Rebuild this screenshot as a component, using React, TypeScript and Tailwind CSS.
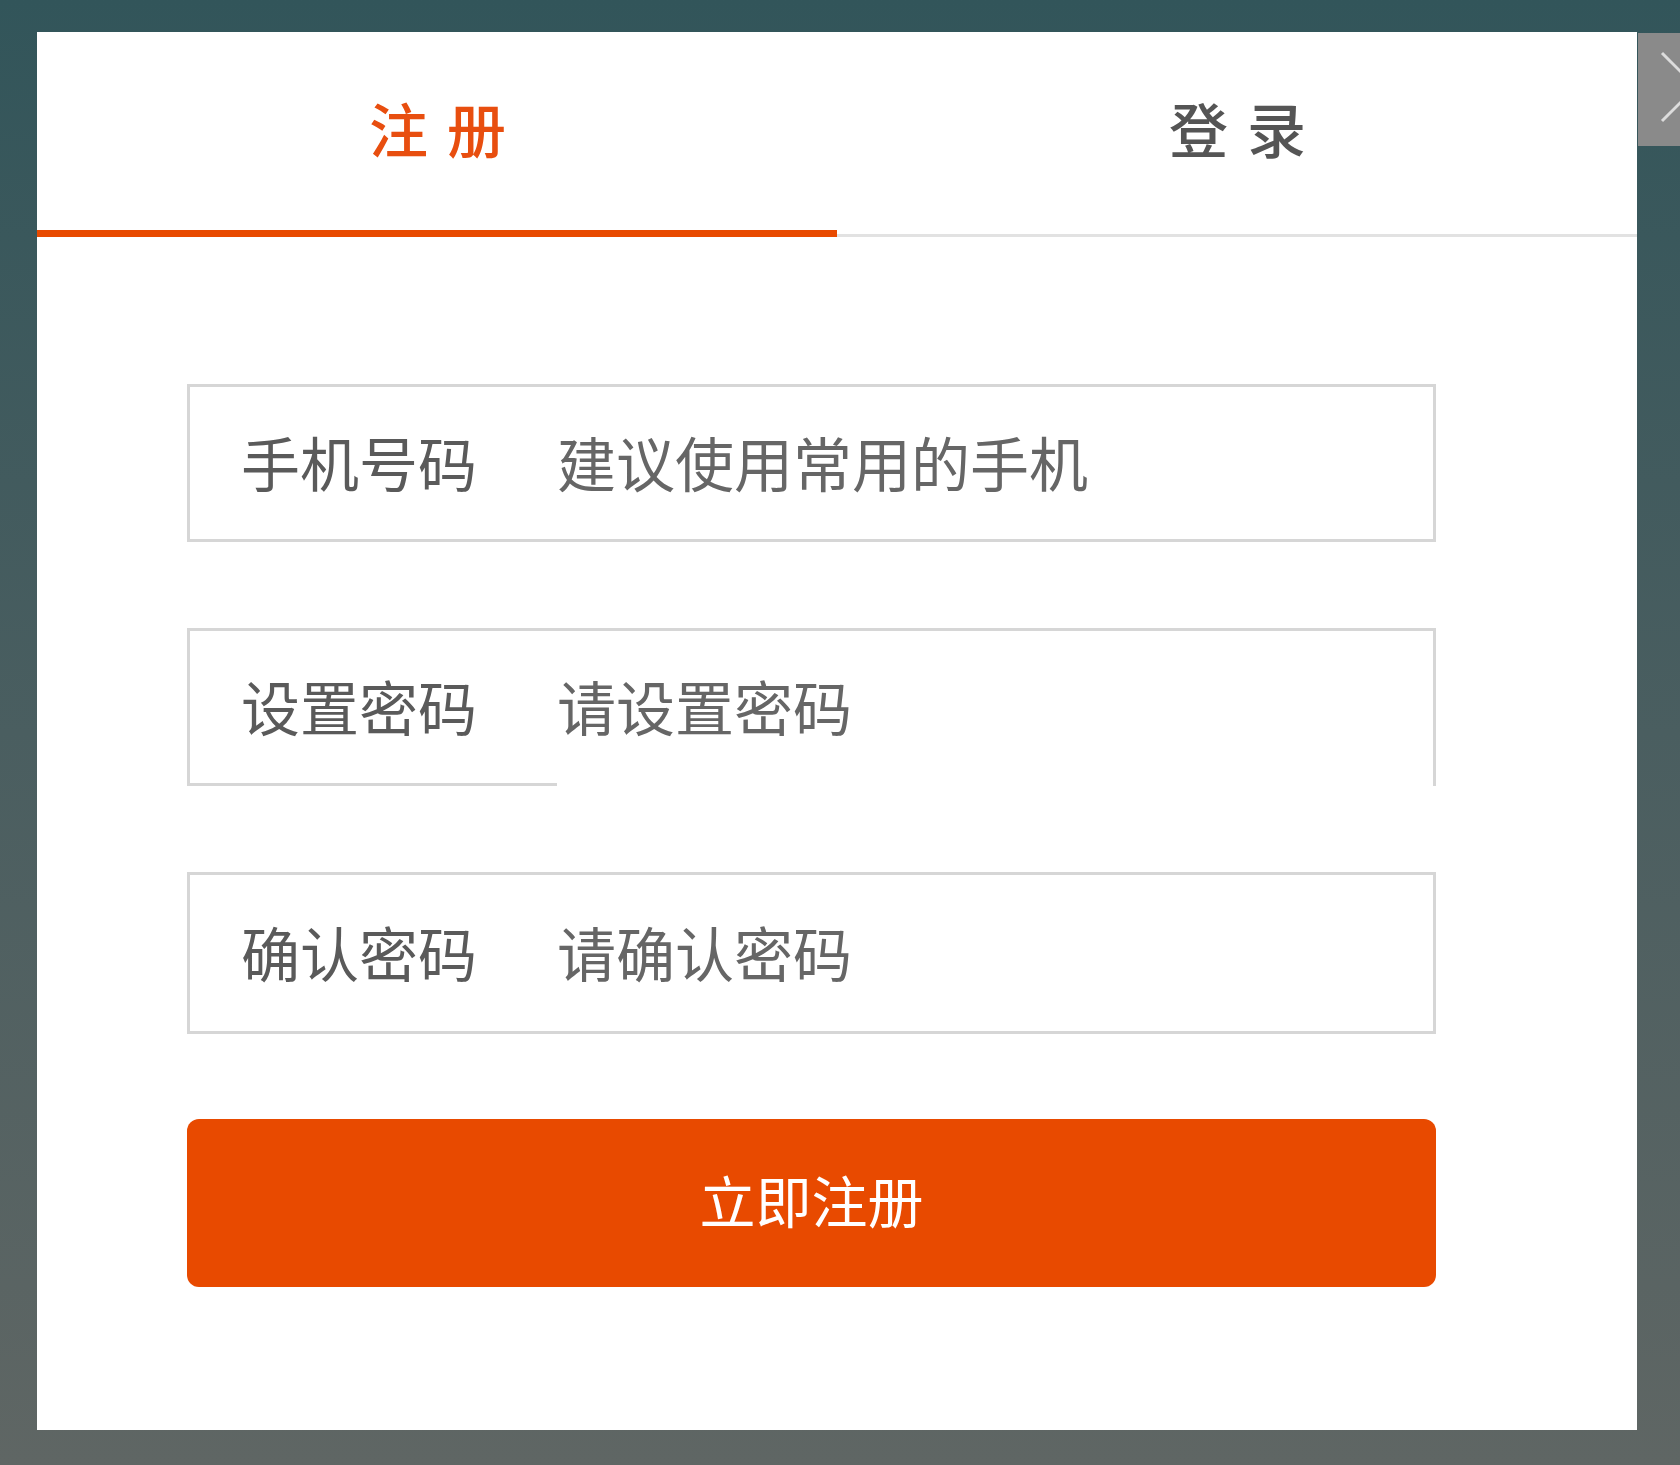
import React from 'react';

const font = { fontFamily: '"Noto Sans CJK SC", "Noto Sans", sans-serif' };

const Field: React.FC<{ label: string; placeholder: string; type?: string; openBottom?: boolean; tall?: boolean }> = ({
  label,
  placeholder,
  type = 'text',
  openBottom,
  tall,
}) => {
  return (
    <div
      className={`flex w-[1249px] border-l-[3px] border-r-[3px] border-t-[3px] border-[#d6d6d6] ${
        tall ? 'h-[162px]' : 'h-[158px]'
      }`}
    >
      <label className="flex w-[367px] shrink-0 items-center border-b-[3px] border-[#d6d6d6] pb-[4px] pl-[51px] text-[59px] leading-none text-[#5a5a5a]">
        {label}
      </label>
      <input
        type={type}
        placeholder={placeholder}
        className={`min-w-0 flex-1 bg-transparent pb-[4px] text-[59px] leading-none text-[#444] outline-none placeholder:text-[#666] ${
          openBottom ? 'border-b-[3px] border-transparent' : 'border-b-[3px] border-[#d6d6d6]'
        }`}
        style={font}
      />
    </div>
  );
};

const App: React.FC = () => {
  return (
    <div
      className="flex h-[1465px] w-[1680px] items-start overflow-hidden bg-gradient-to-b from-[#32555a] via-[#4a5e60] to-[#5f6664] pl-[37px] pt-[32px]"
      style={font}
    >
      {/* modal */}
      <div className="flex h-[1398px] w-[1600px] shrink-0 flex-col bg-white">
        <div className="flex">
          <div className="flex flex-1 flex-col">
            <div className="flex h-[198px] items-center justify-center pb-[8px] pl-[20px] text-[59px] font-medium leading-none tracking-[19px] text-[#e84e0f]">
              注册
            </div>
            <div className="h-[7px] bg-[#e84a00]" />
          </div>
          <div className="flex flex-1 flex-col">
            <div className="flex h-[198px] items-center justify-center pb-[8px] pl-[20px] text-[59px] font-medium leading-none tracking-[19px] text-[#555]">
              登录
            </div>
            <div className="h-[7px] border-b-[3px] border-[#e2e2e2]" />
          </div>
        </div>

        <form className="flex flex-col pl-[150px] pt-[147px]">
          <Field label="手机号码" placeholder="建议使用常用的手机" />
          <div className="mt-[86px]">
            <Field label="设置密码" placeholder="请设置密码" type="password" openBottom />
          </div>
          <div className="mt-[86px]">
            <Field label="确认密码" placeholder="请确认密码" type="password" tall />
          </div>
          <button
            type="button"
            className="mt-[85px] flex h-[168px] w-[1249px] items-center justify-center rounded-[12px] bg-[#e84a00] pb-[8px] text-[56px] leading-none text-white"
          >
            立即注册
          </button>
        </form>
      </div>

      {/* close button */}
      <button type="button" className="ml-[1px] mt-[1px] h-[113px] w-[113px] shrink-0 bg-[#8a8a8a]">
        <svg width="113" height="113" viewBox="0 0 113 113">
          <line x1="24" y1="20" x2="92" y2="88" stroke="#dcdcdc" strokeWidth="3" />
          <line x1="24" y1="88" x2="92" y2="20" stroke="#dcdcdc" strokeWidth="3" />
        </svg>
      </button>
    </div>
  );
};

export default App;
